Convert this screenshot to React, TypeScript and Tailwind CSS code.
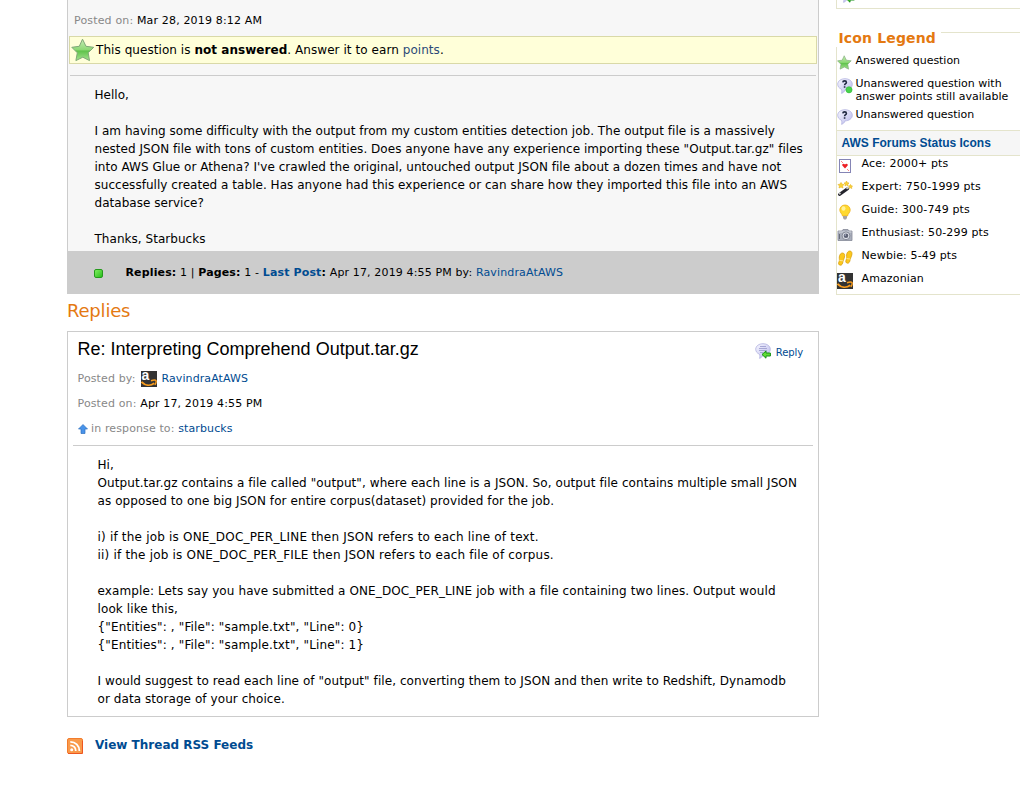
import React from "react";

const link = "text-[#004b91]";

function Amazon({ className = "" }: { className?: string }) {
  return (
    <span className={`relative block h-4 w-4 shrink-0 bg-[#333] ${className}`}>
      <span className="absolute left-[1px] top-[-3px] block h-[14px] font-['Liberation_Sans',sans-serif] text-[14px] font-bold leading-[14px] tracking-normal text-white">a</span>
      <svg viewBox="0 0 16 16" className="absolute inset-0 h-4 w-4" fill="none">
        <path d="M.5 10.800C4 14.500 9 15.300 13.300 12.300" stroke="#f79b1c" strokeWidth="1.900" />
        <path d="M10 9.700C12.500 8.900 14.500 8.900 15 9.700C15.400 10.700 14.700 12.700 13.900 13.900" stroke="#f79b1c" strokeWidth="1.500" />
      </svg>
    </span>
  );
}

function Star({ size }: { size: string }) {
  return (
    <svg viewBox="0 0 24 24" className={`block shrink-0 ${size}`}>
      <defs>
        <linearGradient id="starFill" x1="0" y1="0" x2="0" y2="1">
          <stop offset="0" stopColor="#c5edb4" />
          <stop offset="0.5" stopColor="#8cd874" />
          <stop offset="0.55" stopColor="#5fc24b" />
          <stop offset="1" stopColor="#a5e390" />
        </linearGradient>
      </defs>
      <path d="M11.500 1.200L15 8.300L22.700 9.300L17.200 14.800L18.500 22.600L11.800 19.200L4.900 22.600L6.300 14.800L.8 9.300L8.300 8.300Z" fill="url(#starFill)" stroke="#7fa878" strokeWidth="1" strokeLinejoin="round" />
    </svg>
  );
}

function Bubble({ kind }: { kind: "question" | "points" | "reply" }) {
  return (
    <svg viewBox="0 0 16 16" className="block h-4 w-4 shrink-0">
      <defs>
        <linearGradient id="bubbleFill" x1="0" y1="0" x2="1" y2="1">
          <stop offset="0" stopColor="#f7f7ff" />
          <stop offset="1" stopColor="#b9b9ec" />
        </linearGradient>
      </defs>
      <path d="M8 .7C12 .7 15.300 3 15.300 6.300C15.300 9.600 12 11.800 8 11.900C7.500 13.500 6.300 14.800 4.500 15.300C5 14 5 12.500 4.400 11.200C2.200 10.300 .7 8.500 .7 6.300C.7 3 4 .7 8 .7Z" fill="url(#bubbleFill)" stroke="#b3b3df" strokeWidth=".8" />
      {kind === "reply" ? (
        <path d="M5 3.500H11M4 5.500H12M4 7.500H12M5 9.500H8" stroke="#a0a0d0" strokeWidth=".9" />
      ) : (
        <path d="M5.800 4.300C6 2.400 9.400 2.400 9.400 4.400C9.400 5.700 7.600 5.600 7.600 7.300M7.600 8.300V9.800" fill="none" stroke="#222a44" strokeWidth="1.600" />
      )}
      {kind === "points" && <circle cx="12" cy="11.800" r="3.100" fill="#48d34c" stroke="#31b93a" strokeWidth=".6" />}
      {kind === "reply" && <path d="M7 11.500L11 8V10H15.400V13H11V15.200Z" fill="#5fdc35" stroke="#169016" strokeWidth="1" />}
    </svg>
  );
}

function Ace() {
  return (
    <svg viewBox="0 0 16 16" className="block h-4 w-4">
      <rect x="2.500" y="1.500" width="11" height="13" fill="#fff" stroke="#8585b5" />
      <path d="M8 10.500L5.300 7.400C4.800 6 6.700 5 8 6.600C9.300 5 11.200 6 10.700 7.400Z" fill="#ed2024" />
      <path d="M4 3H5V4H4ZM5 4H6V5H5ZM11 12H12V13H11ZM10 11H11V12H10Z" fill="#f88" />
    </svg>
  );
}

function Wand() {
  return (
    <svg viewBox="0 0 16 16" className="block h-4 w-4">
      <path d="M2.500 13.500L10.500 7.800" stroke="#24242c" strokeWidth="3" strokeLinecap="round" />
      <path d="M2 13L3.500 12M9.500 7.700L11.500 6.300" stroke="#ccc" strokeWidth="1.800" />
      <path d="M4 1.500L5 3.200L7 3.500L5.500 5L6 7L4 6L2 7L2.500 5L1 3.500L3 3.200ZM9.500 0L10.300 1.700L12 2L10.800 3.200L11 5L9.500 4L8 5L8.200 3.200L7 2L8.700 1.700ZM13.500 3.500L14.200 4.800L15.500 5L14.500 6L14.800 7.500L13.500 6.800L12.200 7.500L12.500 6L11.500 5L12.800 4.800Z" fill="#fbd437" stroke="#e9b92c" strokeWidth=".7" />
    </svg>
  );
}

function Bulb() {
  return (
    <svg viewBox="0 0 16 16" className="block h-4 w-4">
      <path d="M8 1C11 1 13.200 3.200 13.200 6C13.200 8.500 11 9.500 10.500 12H5.500C5 9.500 2.800 8.500 2.800 6C2.800 3.200 5 1 8 1Z" fill="#ffd92f" stroke="#eeb11d" strokeWidth=".8" />
      <ellipse cx="6.500" cy="4.500" rx="2" ry="2.300" fill="#fff29b" />
      <path d="M6 12H10V14L9 15.500H7L6 14Z" fill="#a9a3a0" />
    </svg>
  );
}

function Camera() {
  return (
    <svg viewBox="0 0 16 16" className="block h-4 w-4">
      <path d="M1 4H5L6 2.500H11L12 4H15V13.500H1Z" fill="#a9aebb" stroke="#858998" strokeWidth=".8" />
      <path d="M1.500 5H14.500" stroke="#d7dae2" />
      <circle cx="9" cy="8.800" r="3.900" fill="#dde0e8" stroke="#737887" strokeWidth=".8" />
      <circle cx="9" cy="8.800" r="2.300" fill="#5c6173" />
      <circle cx="8.300" cy="8" r=".8" fill="#b8bfd6" />
      <path d="M2.500 7V12" stroke="#686d7c" />
    </svg>
  );
}

function Feet() {
  return (
    <svg viewBox="0 0 16 16" className="block h-4 w-4" fill="#fcc81d" stroke="#d7a010" strokeWidth=".8">
      <path d="M5.500 3C7.500 3 8 5 7.500 7C7.200 8.500 6.300 10 6 11.500C5.700 14 4.800 15.300 3.300 15.200C1.500 15 1.200 13.500 2 11.800C2.700 10.300 2.200 9 2.300 7C2.500 4.700 3.800 3 5.500 3Z" />
      <path d="M12.800 1C14.800 1 15.300 3 14.800 5C14.500 6.500 13.500 8 13.200 9.500C12.800 12 12 13.300 10.500 13.200C8.700 13 8.400 11.500 9.200 9.800C9.900 8.300 9.500 7 9.600 5C9.800 2.700 11.100 1 12.800 1Z" />
      <path d="M2.300 10.300L6.300 10.900M9.500 8.500L13.500 9.100" stroke="#fff3c0" strokeWidth=".7" />
    </svg>
  );
}

function Rss() {
  return (
    <svg viewBox="0 0 16 16" className="block h-4 w-4">
      <rect x=".5" y=".5" width="15" height="15" rx="1.500" fill="#f99a4b" stroke="#f27c2c" />
      <path d="M1 15.500H15.500V3" fill="none" stroke="#ee5620" />
      <circle cx="4.700" cy="11.700" r="1.500" fill="#fff" />
      <path d="M3.300 7.300A5.500 5.500 0 0 1 8.800 13M3.300 3.800A9 9 0 0 1 12.400 13" fill="none" stroke="#fff" strokeWidth="1.800" />
    </svg>
  );
}

const question = [
  "Hello,",
  "",
  "I am having some difficulty with the output from my custom entities detection job. The output file is a massively",
  "nested JSON file with tons of custom entities. Does anyone have any experience importing these \"Output.tar.gz\" files",
  "into AWS Glue or Athena? I've crawled the original, untouched output JSON file about a dozen times and have not",
  "successfully created a table. Has anyone had this experience or can share how they imported this file into an AWS",
  "database service?",
  "",
  "Thanks, Starbucks",
];

const answerIntro = [
  "Hi,",
  "Output.tar.gz contains a file called \"output\", where each line is a JSON. So, output file contains multiple small JSON",
  "as opposed to one big JSON for entire corpus(dataset) provided for the job.",
  "",
];

const answerModes = [
  "i) if the job is ONE_DOC_PER_LINE then JSON refers to each line of text.",
  "ii) if the job is ONE_DOC_PER_FILE then JSON refers to each file of corpus.",
  "",
];

const answerExample = [
  "example: Lets say you have submitted a ONE_DOC_PER_LINE job with a file containing two lines. Output would",
  "look like this,",
];

const answerSample = [
  "{\"Entities\": , \"File\": \"sample.txt\", \"Line\": 0}",
  "{\"Entities\": , \"File\": \"sample.txt\", \"Line\": 1}",
  "",
];

const answerAdvice = [
  "I would suggest to read each line of \"output\" file, converting them to JSON and then write to Redshift, Dynamodb",
  "or data storage of your choice.",
];

function Lines({ lines, className }: { lines: string[]; className: string }) {
  return (
    <div className={`text-[12px] leading-[18px] ${className}`}>
      {lines.map((line, i) => (
        <p key={i} className="h-[18px] whitespace-nowrap">{line}</p>
      ))}
    </div>
  );
}

const statuses = [
  { icon: <Ace />, label: "Ace: 2000+ pts" },
  { icon: <Wand />, label: "Expert: 750-1999 pts" },
  { icon: <Bulb />, label: "Guide: 300-749 pts" },
  { icon: <Camera />, label: "Enthusiast: 50-299 pts" },
  { icon: <Feet />, label: "Newbie: 5-49 pts" },
  { icon: <Amazon />, label: "Amazonian" },
];

export default function App() {
  return (
    <div className="flex h-[811px] w-[1020px] items-start overflow-hidden whitespace-nowrap bg-white pl-[67px] font-['DejaVu_Sans',Verdana,sans-serif] text-black">
      <main className="w-[752px] shrink-0">
        <section className="h-[251px] border-x border-[#ccc] bg-[#f7f7f7] px-px">
          <div className="h-9 overflow-hidden pl-[5px] pt-[13px] text-[11px] leading-4 tracking-[0.16px]">
            <span className="text-[#888]">Posted on:</span> Mar 28, 2019 8:12 AM
          </div>
          <div className="flex h-7 items-center border border-[#d9d9a8] bg-[#ffffd9] pl-px text-[12px] leading-[18px] tracking-[0.06px]">
            <Star size="h-6 w-6" />
            <p className="pl-px"><span>This question is </span><b className="tracking-[0.04px]">not answered</b><span>. Answer it to earn </span><span className="text-[#2b4a77]">points</span>.</p>
          </div>
          <hr className="mx-px mt-[11px] border-[#ccc]" />
          <div className="pl-[25.500px] pt-[10px]"><Lines lines={question} className="tracking-[0.035px]" /></div>
        </section>
        <div className="flex h-[43px] items-center bg-[#ccc] pl-[27px] text-[11px] tracking-[0.14px]">
          <span className="mr-[22.500px] mt-px h-[9px] w-[9px] rounded-[2px] border border-[#259a1c] bg-gradient-to-br from-[#7cf05c] to-[#22bd18]" />
          <p className="mt-px"><b>Replies:</b> 1 | <b>Pages:</b> 1 - <b><span className={link}>Last Post</span>:</b> Apr 17, 2019 4:55 PM by: <span className={link}>RavindraAtAWS</span></p>
        </div>
        <h2 className="h-[37px] pt-[5px] text-[18px] leading-6 tracking-[-0.2px] text-[#e47911]">Replies</h2>
        <section className="h-[386px] border border-[#ccc] px-[5px]">
          <div className="flex h-[113px] justify-between pl-[4.500px] pr-[10px] text-[11px] leading-4 tracking-[0.14px]">
            <div>
              <h3 className="h-[39px] pt-[5px] font-['Liberation_Sans',sans-serif] text-[18px] leading-6 tracking-normal">Re: Interpreting Comprehend Output.tar.gz</h3>
              <div className="flex h-[25px] text-[#888]"><span>Posted by:</span><Amazon className="ml-[5px]" /><span className={`ml-[5px] tracking-[0.080px] ${link}`}>RavindraAtAWS</span></div>
              <div className="h-[25px]"><span className="text-[#888]">Posted on:</span> Apr 17, 2019 4:55 PM</div>
              <div className="flex text-[#888]">
                <svg viewBox="0 0 10 10" className="mr-[3.500px] mt-[3px] h-[10px] w-[10px]"><path d="M5 .5L9.500 5H7V9.500H3V5H.5Z" fill="#4893ea" stroke="#2e70be" strokeWidth=".7" /></svg>
                <span className="tracking-[0.120px]">in response to: <span className={link}>starbucks</span></span>
              </div>
            </div>
            <div className={`flex h-4 pt-[11px] text-[10px] tracking-[-0.1px] ${link}`}>
              <Bubble kind="reply" /><span className="ml-[5px] mt-[2px]">Reply</span>
            </div>
          </div>
          <hr className="border-[#ccc]" />
          <div className="pl-[24.500px] pt-[10px]">
            <Lines lines={answerIntro} className="tracking-[0.080px]" />
            <Lines lines={answerModes} className="tracking-[0.195px]" />
            <Lines lines={answerExample} className="tracking-[0.110px]" />
            <Lines lines={answerSample} className="tracking-[0.145px]" />
            <Lines lines={answerAdvice} className="tracking-[0.070px]" />
          </div>
        </section>
        <div className={`mt-[19px] flex h-[18px] items-center text-[12px] font-bold ${link}`}>
          <span className="mt-[2px]"><Rss /></span><span className="ml-3">View Thread RSS Feeds</span>
        </div>
      </main>

      <aside className="ml-[17px] w-[184px] shrink-0 text-[11px] tracking-[0.02px]">
        <div className="h-[9px] overflow-hidden border-b border-l border-[#e4e4cc]"><div className="-mt-[13px] ml-[2px]"><Bubble kind="reply" /></div></div>
        <div className="mt-[18px] flex h-[20px]">
          <h2 className="w-[105px] pl-[2.500px] text-[14px] font-bold leading-[22px] tracking-[0.150px] text-[#e47911]">Icon Legend</h2>
          <div className="mt-[5px] flex-1 border-t border-[#e4e4cc]" />
        </div>
        <div className="h-[248px] border-b border-l border-[#e4e4cc]">
          <div className="flex h-[29px] pt-[5px]"><div className="mt-[3px] w-[15px]"><Star size="h-[15px] w-[15px]" /></div><span className="ml-[3.500px] leading-[18px] tracking-[-0.030px]">Answered question</span></div>
          <div className="flex h-[31px]"><div className="mt-[2px]"><Bubble kind="points" /></div><p className="ml-[2.500px] mt-[1px] leading-[13px] tracking-normal">Unanswered question with<br />answer points still available</p></div>
          <div className="flex h-[23px]"><div className="mt-[2px]"><Bubble kind="question" /></div><span className="ml-[2.500px] leading-4 tracking-[-0.030px]">Unanswered question</span></div>
          <h3 className="h-[26px] border-y border-[#e4e4cc] bg-[#f6f6f6] pl-[4.500px] font-['Liberation_Sans',sans-serif] text-[12px] font-bold leading-6 tracking-normal text-[#004b91]">AWS Forums Status Icons</h3>
          {statuses.map(({ icon, label }) => (
            <div key={label} className="flex h-[23px]"><div className="mt-[2px] w-4">{icon}</div><span className="ml-[8.500px] leading-4 tracking-[0.13px]">{label}</span></div>
          ))}
        </div>
      </aside>
    </div>
  );
}
